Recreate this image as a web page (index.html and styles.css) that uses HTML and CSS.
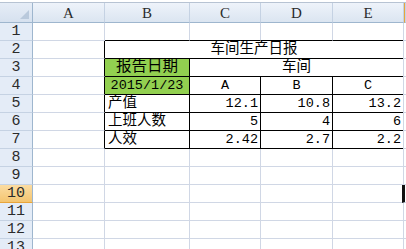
FILE: index.html
```html
<!DOCTYPE html>
<html lang="zh-CN">
<head>
    <meta charset="UTF-8">
    <title>车间生产日报</title>
    <link rel="stylesheet" href="styles.css">
</head>
<body>
    <div class="topband"></div>
    <div class="sheet">
        <!-- 列标题 -->
        <div class="corner"></div>
        <div class="ch">A</div>
        <div class="ch">B</div>
        <div class="ch">C</div>
        <div class="ch">D</div>
        <div class="ch">E</div>
        <div class="ch ch-on"></div>

        <!-- 第1行 -->
        <div class="rh">1</div>
        <div class="c"></div>
        <div class="c tb"></div>
        <div class="c tb"></div>
        <div class="c tb"></div>
        <div class="c tb"></div>
        <div class="c last"></div>

        <!-- 第2行：标题 -->
        <div class="rh">2</div>
        <div class="c lb"></div>
        <div class="c box span4 center cn">车间生产日报</div>
        <div class="c last"></div>

        <!-- 第3行 -->
        <div class="rh">3</div>
        <div class="c lb"></div>
        <div class="c box green center big">报告日期</div>
        <div class="c box span3 center cn">车间</div>
        <div class="c last"></div>

        <!-- 第4行 -->
        <div class="rh">4</div>
        <div class="c lb"></div>
        <div class="c box green center">2015/1/23</div>
        <div class="c box center">A</div>
        <div class="c box center">B</div>
        <div class="c box center">C</div>
        <div class="c last"></div>

        <!-- 第5行 -->
        <div class="rh">5</div>
        <div class="c lb"></div>
        <div class="c box label cn">产值</div>
        <div class="c box num">12.1</div>
        <div class="c box num">10.8</div>
        <div class="c box num">13.2</div>
        <div class="c last"></div>

        <!-- 第6行 -->
        <div class="rh">6</div>
        <div class="c lb"></div>
        <div class="c box label cn">上班人数</div>
        <div class="c box num">5</div>
        <div class="c box num">4</div>
        <div class="c box num">6</div>
        <div class="c last"></div>

        <!-- 第7行 -->
        <div class="rh">7</div>
        <div class="c lb"></div>
        <div class="c box label cn">人效</div>
        <div class="c box num">2.42</div>
        <div class="c box num">2.7</div>
        <div class="c box num">2.2</div>
        <div class="c last"></div>

        <div class="rh">8</div>
        <div class="c"></div><div class="c"></div><div class="c"></div><div class="c"></div><div class="c"></div><div class="c last"></div>

        <div class="rh">9</div>
        <div class="c"></div><div class="c"></div><div class="c"></div><div class="c"></div><div class="c"></div><div class="c last"></div>

        <div class="rh rh-on">10</div>
        <div class="c"></div><div class="c"></div><div class="c"></div><div class="c"></div><div class="c"></div><div class="c last sel"></div>

        <div class="rh">11</div>
        <div class="c"></div><div class="c"></div><div class="c"></div><div class="c"></div><div class="c"></div><div class="c last"></div>

        <div class="rh">12</div>
        <div class="c"></div><div class="c"></div><div class="c"></div><div class="c"></div><div class="c"></div><div class="c last"></div>

        <div class="rh">13</div>
        <div class="c"></div><div class="c"></div><div class="c"></div><div class="c"></div><div class="c"></div><div class="c last"></div>
    </div>
</body>
</html>
```

FILE: styles.css
```css
* {
    margin: 0;
    padding: 0;
    box-sizing: border-box;
}

body {
    width: 406px;
    height: 249px;
    overflow: hidden;
    background: #fff;
    font-family: "Liberation Mono", "Noto Sans CJK SC", monospace;
    font-size: 13.5px;
    color: #000;
}

.topband {
    height: 3px;
    background: #fff;
    border-bottom: 1px solid #b7c3d3;
}

.sheet {
    display: grid;
    grid-template-columns: 33px 72px 85px 71px 72px 71px 1fr;
    grid-template-rows: 20px;
    grid-auto-rows: 18px;
}

/* 表头 */
.corner {
    position: relative;
    background: linear-gradient(#e6edf7, #d6e1ef);
    border-right: 1px solid #9eb6ce;
    border-bottom: 1px solid #9eb6ce;
}

.corner::after {
    content: '';
    position: absolute;
    right: 3px;
    bottom: 3px;
    border-left: 9px solid transparent;
    border-bottom: 9px solid #b9c9dc;
}

.ch {
    background: linear-gradient(#eef3fa, #dbe5f1);
    border-right: 1px solid #c5d2e3;
    border-bottom: 1px solid #9eb6ce;
    text-align: center;
    line-height: 20px;
    color: #2b2b2b;
    font-family: "Liberation Serif", serif;
    font-size: 15px;
}

.ch-on {
    background: linear-gradient(#fbe1ac, #f3c46b);
    border-left: 1px solid #e8a53b;
}

.rh {
    background: #e4ecf7;
    border-right: 1px solid #9eb6ce;
    border-bottom: 1px solid #c5d2e3;
    text-align: center;
    line-height: 17px;
    color: #2b2b2b;
    font-size: 15px;
}

.rh-on {
    background: linear-gradient(#fbdca2, #f4c570);
    border-bottom-color: #e8a53b;
}

/* 单元格 */
.c {
    border-right: 1px solid #d0d7e5;
    border-bottom: 1px solid #d0d7e5;
    line-height: 17px;
    white-space: nowrap;
    overflow: hidden;
}

.c.last {
    border-right: none;
    border-left: 1px solid #d0d7e5;
    margin-left: -1px;
}

.c.sel {
    border-left: 3px solid #111;
    margin-left: -2px;
}

/* 报表边框 */
.tb {
    border-bottom-color: #000;
}

.lb {
    border-right-color: #000;
}

.box {
    border-right-color: #000;
    border-bottom-color: #000;
}

.span4 {
    grid-column: span 4;
}

.span3 {
    grid-column: span 3;
}

.green {
    background: #92d050;
}

.cn {
    font-size: 14.5px;
}

.big {
    font-size: 15.5px;
}

.center {
    text-align: center;
}

.label {
    padding-left: 3px;
}

.num {
    text-align: right;
    padding-right: 2px;
}
```
